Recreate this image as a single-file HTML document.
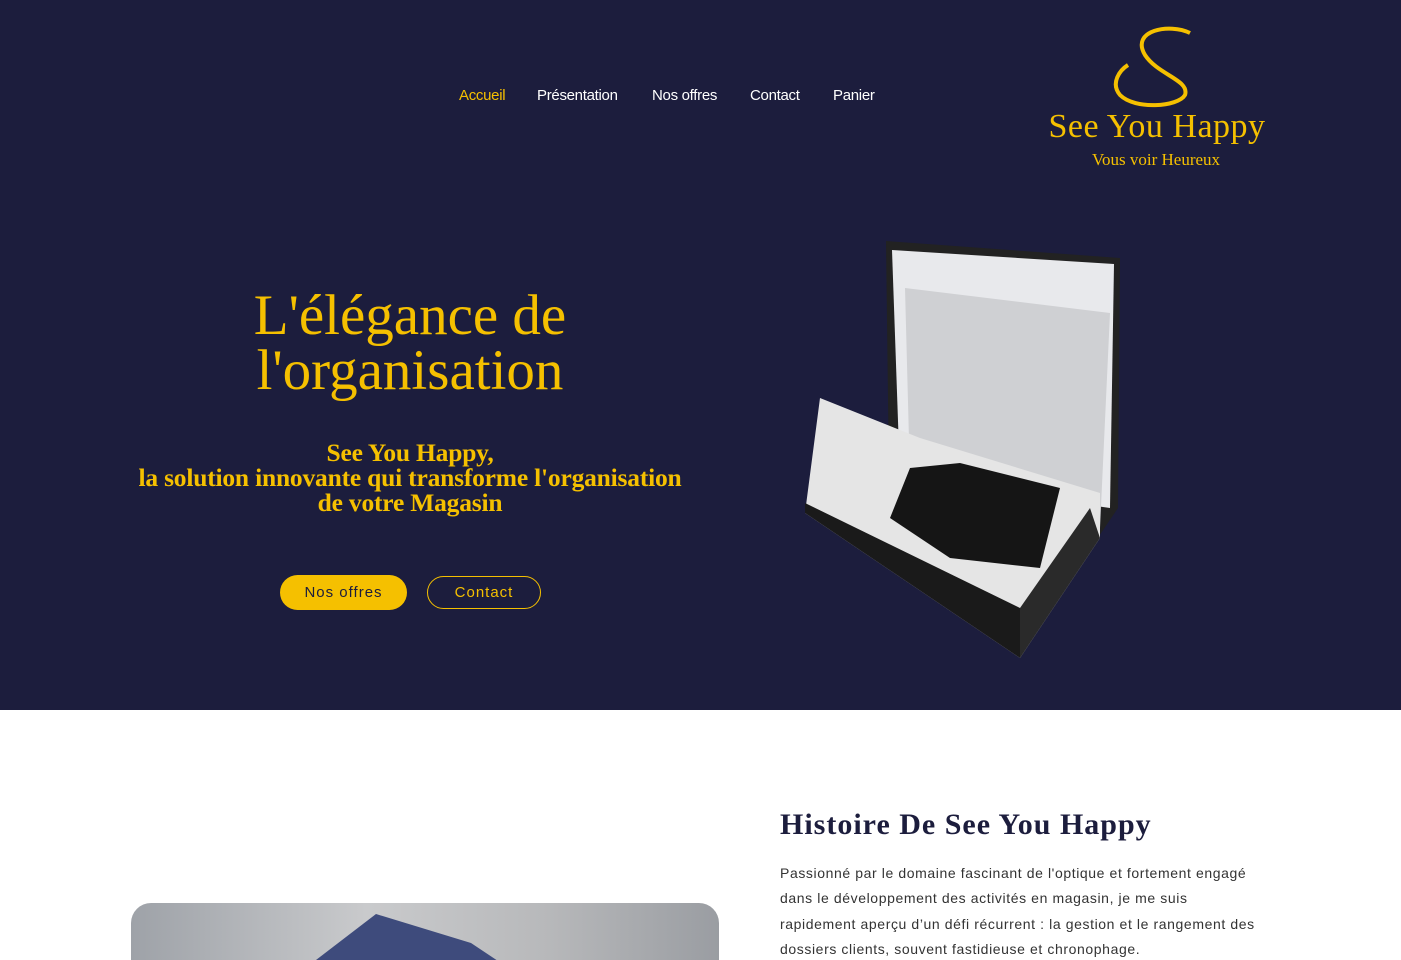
<!DOCTYPE html>
<html><head><meta charset="utf-8"><style>
*{margin:0;padding:0;box-sizing:border-box}
html,body{width:1401px;height:960px;overflow:hidden}
body{background:#fff;font-family:"Liberation Sans",sans-serif;position:relative}
.hero{position:absolute;left:0;top:0;width:1401px;height:710px;background:#1c1d3d}
nav a{position:absolute;top:87px;font-size:15px;color:#fff;text-decoration:none;letter-spacing:-.3px}
.y{color:#f5c000}
h1{position:absolute;left:110px;width:600px;top:288px;text-align:center;font-family:"Liberation Serif",serif;font-weight:normal;font-size:57px;line-height:55px;color:#f5c000}
.sub{position:absolute;left:90px;width:640px;top:440px;text-align:center;font-family:"Liberation Serif",serif;font-weight:bold;font-size:25.5px;line-height:25px;color:#f5c000;letter-spacing:-.2px}
.b1{position:absolute;left:280px;top:575px;width:127px;height:35px;border-radius:18px;background:#f5c000;color:#1c1d3d;font-size:15px;letter-spacing:1px;text-align:center;line-height:35px}
.b2{position:absolute;left:427px;top:576px;width:114px;height:33px;border-radius:17px;border:1.5px solid #f5c000;color:#f5c000;font-size:15px;letter-spacing:1px;text-align:center;line-height:31px}
h2{position:absolute;left:780px;top:808px;font-family:"Liberation Serif",serif;font-size:30px;color:#1c1d3d;letter-spacing:1px}
p{position:absolute;left:780px;top:861px;width:482px;font-size:14px;line-height:25.3px;color:#333;letter-spacing:.6px}
.img{position:absolute;left:131px;top:903px;width:588px;height:80px;border-radius:20px;overflow:hidden;background:linear-gradient(90deg,#9ea2a8,#c9cacc 40%,#b8b9bb 70%,#9a9da2)}
</style></head><body>
<div class="hero">
<nav><a class="y" style="left:459px">Accueil</a><a style="left:537px">Présentation</a><a style="left:652px">Nos offres</a><a style="left:750px">Contact</a><a style="left:833px">Panier</a></nav>
<svg style="position:absolute;left:1040px;top:25px" width="240" height="150">
<path d="M150 8 C130 -2 90 5 105 30 C118 50 150 55 145 70 C138 82 95 85 80 70 C70 58 80 45 88 40" fill="none" stroke="#f5c000" stroke-width="4"/>
<text x="117" y="112" text-anchor="middle" font-family="Liberation Serif" font-size="34" fill="#f5c000" letter-spacing="0.5">See You Happy</text>
<text x="116" y="140" text-anchor="middle" font-family="Liberation Serif" font-size="17" fill="#f5c000">Vous voir Heureux</text>
</svg>
<h1>L'élégance de<br>l'organisation</h1>
<div class="sub">See You Happy,<br>la solution innovante qui transforme l'organisation<br>de votre Magasin</div>
<div class="b1">Nos offres</div><div class="b2">Contact</div>
<svg style="position:absolute;left:800px;top:238px" width="330" height="425">
<polygon points="86,3 320,20 318,270 230,400 90,320" fill="#222"/>
<polygon points="92,12 314,26 310,270 100,240" fill="#e8e9ec"/>
<polygon points="105,50 310,75 300,290 110,240" fill="#cfd0d3"/>
<polygon points="20,160 120,200 300,255 300,300 220,420 5,275" fill="#e5e5e5"/>
<polygon points="110,230 160,225 260,250 240,330 150,320 90,280" fill="#151515"/>
<polygon points="5,265 220,370 220,420 5,275" fill="#1a1a1a"/>
<polygon points="220,420 300,300 290,270 220,370" fill="#2a2a2a"/>
</svg>
</div>
<h2>Histoire De See You Happy</h2>
<p>Passionné par le domaine fascinant de l'optique et fortement engagé dans le développement des activités en magasin, je me suis rapidement aperçu d’un défi récurrent : la gestion et le rangement des dossiers clients, souvent fastidieuse et chronophage.</p>
<div class="img"><svg width="588" height="60" style="position:absolute;left:0;top:0"><polygon points="155,80 245,11 340,40 400,80" fill="#3e4b7c"/></svg></div>
</body></html>
